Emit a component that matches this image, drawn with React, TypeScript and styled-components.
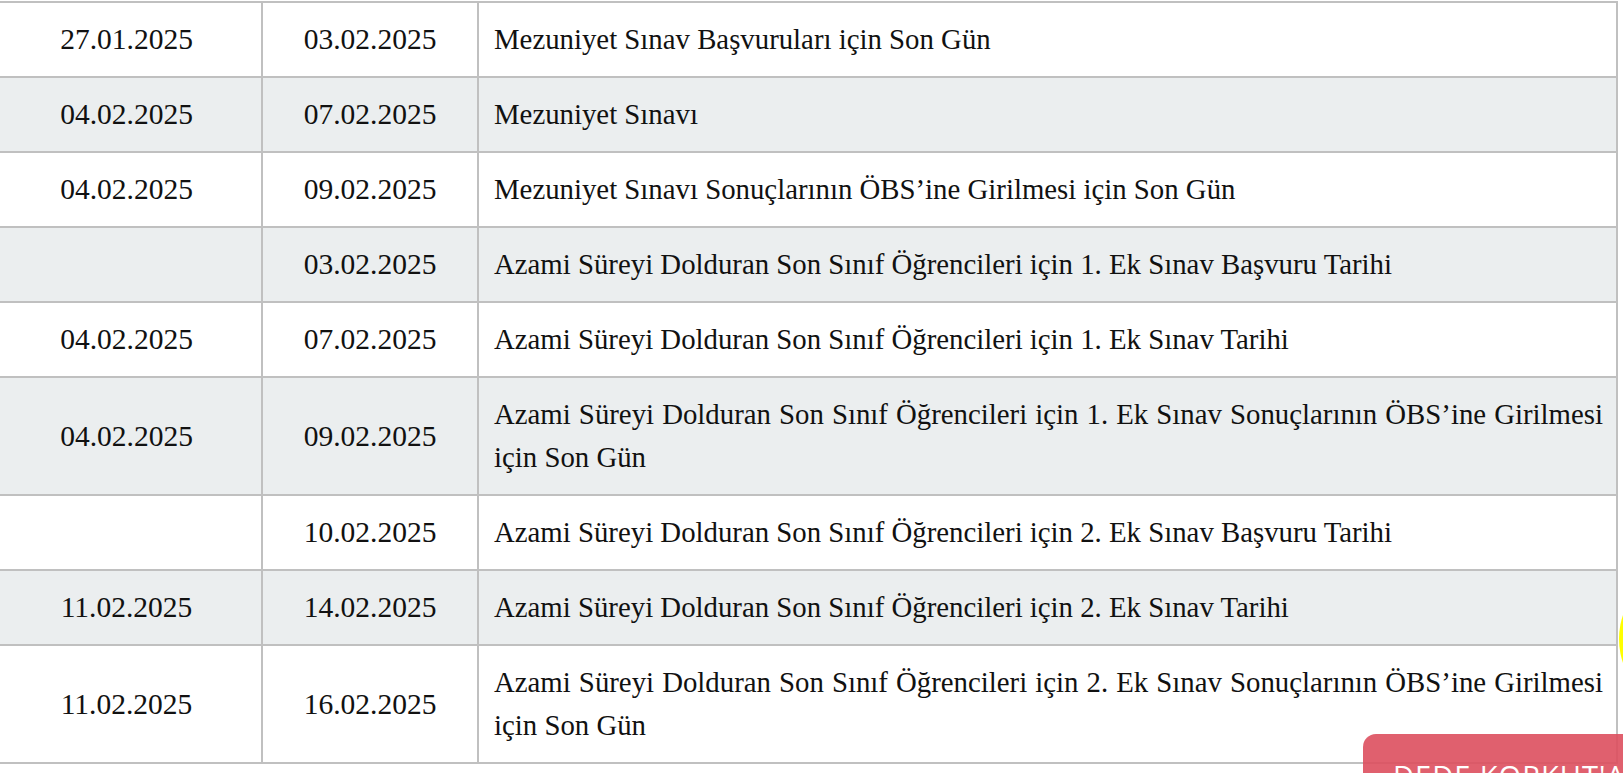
import React from "react";
import styled, { createGlobalStyle } from "styled-components";

const Global = createGlobalStyle`
  html, body { margin: 0; padding: 0; background: #ffffff; overflow: hidden; }
  body { font-family: "Liberation Serif", "Times New Roman", serif; color: #111111; }
`;

const Page = styled.div`
  position: relative;
  width: 1623px;
  height: 773px;
  overflow: hidden;
  padding-top: 1px;
  box-sizing: border-box;
`;

const Table = styled.div`
  margin-left: -10px;
  width: 1628px;
  border-top: 2px solid #c0c0c0;
  border-left: 2px solid #c0c0c0;
  box-sizing: border-box;
`;

const Row = styled.div<{ $shade: boolean }>`
  display: grid;
  grid-template-columns: 271px 216px 1fr;
  background: ${(p) => (p.$shade ? "#ebeeef" : "#ffffff")};
`;

const Cell = styled.div`
  box-sizing: border-box;
  border-right: 2px solid #c0c0c0;
  border-bottom: 2px solid #c0c0c0;
  padding: 15px 8px;
  line-height: 43px;
  display: flex;
  align-items: center;
`;

const DateCell = styled(Cell)`
  justify-content: center;
  font-size: 29.5px;
  padding-left: 0;
  padding-right: 0;
`;

const DescCell = styled(Cell)`
  font-size: 28.8px;
  text-align: justify;
  padding: 15px 13px 15px 15px;
`;

const AskButton = styled.div`
  position: absolute;
  left: 1363px;
  top: 734px;
  width: 320px;
  height: 70px;
  box-sizing: border-box;
  border-radius: 13px 13px 0 0;
  background: #dd4f5f;
  opacity: 0.9;
  color: #ffffff;
  font-family: "Open Sans", "Liberation Sans", sans-serif;
  font-size: 29px;
  line-height: 1;
  padding: 27px 0 0 30px;
  white-space: nowrap;
  letter-spacing: 1px;
`;

const Bubble = styled.div`
  position: absolute;
  left: 1619px;
  top: 565px;
  width: 148px;
  height: 148px;
  border-radius: 50%;
  background: #ffff00;
`;

type Item = { start: string; end: string; text: string };

const items: Item[] = [
  { start: "27.01.2025", end: "03.02.2025", text: "Mezuniyet Sınav Başvuruları için Son Gün" },
  { start: "04.02.2025", end: "07.02.2025", text: "Mezuniyet Sınavı" },
  { start: "04.02.2025", end: "09.02.2025", text: "Mezuniyet Sınavı Sonuçlarının ÖBS’ine Girilmesi için Son Gün" },
  { start: "", end: "03.02.2025", text: "Azami Süreyi Dolduran Son Sınıf Öğrencileri için 1. Ek Sınav Başvuru Tarihi" },
  { start: "04.02.2025", end: "07.02.2025", text: "Azami Süreyi Dolduran Son Sınıf Öğrencileri için 1. Ek Sınav Tarihi" },
  { start: "04.02.2025", end: "09.02.2025", text: "Azami Süreyi Dolduran Son Sınıf Öğrencileri için 1. Ek Sınav Sonuçlarının ÖBS’ine Girilmesi için Son Gün" },
  { start: "", end: "10.02.2025", text: "Azami Süreyi Dolduran Son Sınıf Öğrencileri için 2. Ek Sınav Başvuru Tarihi" },
  { start: "11.02.2025", end: "14.02.2025", text: "Azami Süreyi Dolduran Son Sınıf Öğrencileri için 2. Ek Sınav Tarihi" },
  { start: "11.02.2025", end: "16.02.2025", text: "Azami Süreyi Dolduran Son Sınıf Öğrencileri için 2. Ek Sınav Sonuçlarının ÖBS’ine Girilmesi için Son Gün" },
];

export default function App() {
  return (
    <Page>
      <Global />
      <Table>
        {items.map((it, i) => (
          <Row key={i} $shade={i % 2 === 1}>
            <DateCell>{it.start}</DateCell>
            <DateCell>{it.end}</DateCell>
            <DescCell>{it.text}</DescCell>
          </Row>
        ))}
      </Table>
      <Bubble />
      <AskButton>DEDE KORKUT'A SOR</AskButton>
    </Page>
  );
}
